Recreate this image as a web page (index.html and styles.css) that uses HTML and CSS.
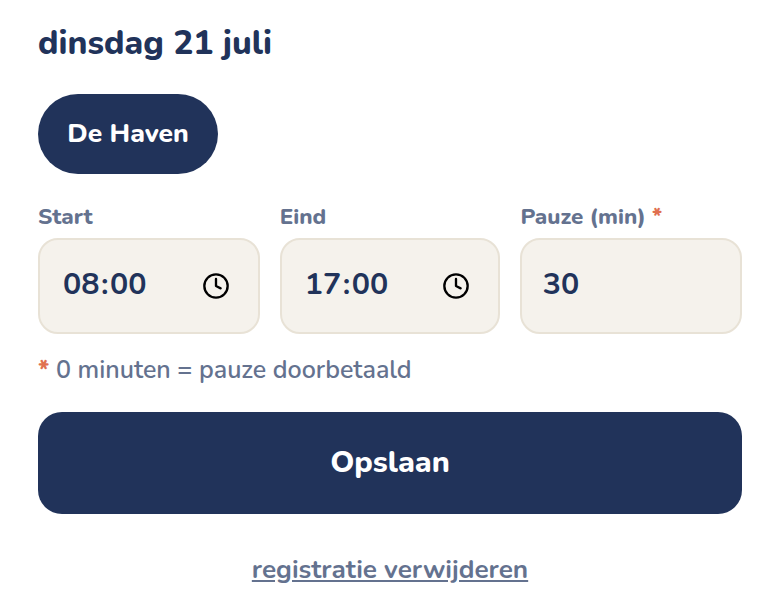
FILE: index.html
```html
<!DOCTYPE html>
<html lang="nl">
<head>
<meta charset="utf-8">
<title>Registratie</title>
<link rel="stylesheet" href="styles.css">
</head>
<body>
<main class="panel">
  <h1 class="date">dinsdag 21 juli</h1>
  <div class="chips"><button class="chip" type="button">De Haven</button></div>
  <div class="fields">
    <div class="field">
      <label class="label">Start</label>
      <div class="input input-time"><span>08<span class="colon">:</span>00</span>
        <svg class="clock" viewBox="0 0 24 24" fill="none" stroke="#000" stroke-width="2" stroke-linecap="round" stroke-linejoin="round"><circle cx="12" cy="12" r="10"/><path d="M12 6v6l4 2"/></svg>
      </div>
    </div>
    <div class="field">
      <label class="label">Eind</label>
      <div class="input input-time"><span>17<span class="colon">:</span>00</span>
        <svg class="clock" viewBox="0 0 24 24" fill="none" stroke="#000" stroke-width="2" stroke-linecap="round" stroke-linejoin="round"><circle cx="12" cy="12" r="10"/><path d="M12 6v6l4 2"/></svg>
      </div>
    </div>
    <div class="field">
      <label class="label">Pauze (min) <span class="star">*</span></label>
      <div class="input"><span>30</span></div>
    </div>
  </div>
  <p class="note"><span class="star">*</span> 0 minuten = pauze doorbetaald</p>
  <button class="save" type="button">Opslaan</button>
  <div class="remove"><a href="#">registratie verwijderen</a></div>
</main>
</body>
</html>
```

FILE: styles.css
```css
* { box-sizing: border-box; }
html, body { margin: 0; background: #fff; }
body { font-family: "Nunito", "Noto Sans", "Open Sans", sans-serif; color: #21335a; }
.panel { width: 780px; height: 615px; padding: 24px 38px 0; overflow: hidden; }
.date { margin: 0 0 32px; font-size: 33.6px; line-height: 38px; font-weight: 800; color: #21335a; }
.chips { display: flex; margin-bottom: 29px; }
.chip { width: 180px; height: 80px; padding: 0 0 2px; border: 0; border-radius: 40px; background: #21335a; color: #fff; font: 800 26.4px/1 "Nunito", "Noto Sans", sans-serif; }
.fields { display: grid; grid-template-columns: 221.7px 220.7px 221.6px; column-gap: 20px; }
.label { display: block; height: 29px; font-size: 22.4px; line-height: 28px; font-weight: 800; color: #64728f; margin-bottom: 6px; }
.star { color: #e07050; font-weight: 800; }
.input { display: flex; align-items: center; justify-content: space-between; height: 96px; padding: 0 28px 4px 20.4px; border: 2px solid #e8e2d6; border-radius: 20px; background: #f5f2ec; font-size: 30.4px; font-weight: 700; color: #21335a; }
.input-time { padding-left: 23px; }
.colon { margin: 0 1.5px; }
.clock { width: 28px; height: 28px; margin-top: 4px; }
.note { margin: 20px 0 0; font-size: 25px; line-height: 32px; font-weight: 600; color: #64728f; }
.save { display: block; width: 100%; height: 102px; margin-top: 26px; padding: 0 0 2px; border: 0; border-radius: 24px; background: #21335a; color: #fff; font: 800 30.4px/1 "Nunito", "Noto Sans", sans-serif; }
.remove { margin-top: 39px; text-align: center; }
.remove a { font-size: 26.2px; line-height: 34px; font-weight: 700; color: #64728f; text-decoration: underline; }
```
